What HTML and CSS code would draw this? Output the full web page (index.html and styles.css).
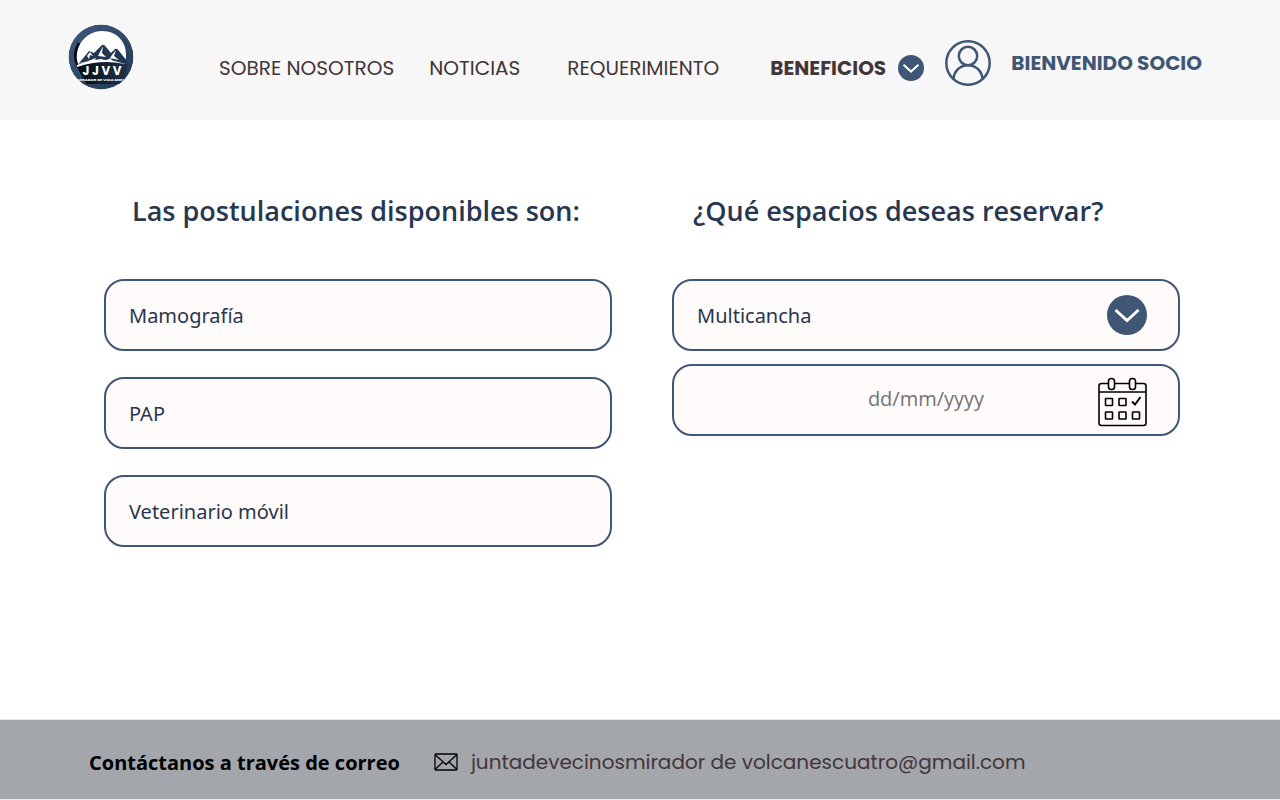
FILE: index.html
```html
<!DOCTYPE html>
<html lang="es">
<head>
<meta charset="utf-8">
<meta name="viewport" content="width=device-width, initial-scale=1">
<title>JJVV Mirador de Volcanes</title>
<link rel="stylesheet" href="styles.css">
</head>
<body>
<header class="header">
  <a class="logo" href="#" aria-label="JJVV Mirador de Volcanes">
    <svg viewBox="0 0 66 66" width="66" height="66">
      <defs>
        <clipPath id="disc"><circle cx="33" cy="33" r="32.5"/></clipPath>
        <linearGradient id="shade" x1="0" y1="0" x2="1" y2="1">
          <stop offset="0.2" stop-color="#3a5375"/>
          <stop offset="1" stop-color="#22374f"/>
        </linearGradient>
        <linearGradient id="base" x1="0" y1="0" x2="1" y2="0">
          <stop offset="0" stop-color="#05090f"/>
          <stop offset="1" stop-color="#1f334c"/>
        </linearGradient>
      </defs>
      <g clip-path="url(#disc)">
        <circle cx="33" cy="33" r="32.5" fill="url(#shade)"/>
        <path d="M10 18Q2 32 10 45L18 60L56 60L60 40L30 36Z" fill="url(#base)"/>
        <path d="M10 40C5 24 17 7 34 7C49 7 59 18 58 33L57 40Q33 32 10 40Z" fill="#fff"/>
        <path d="M11 39L17 32L21 27L26 29L34 21Q36 20 38 23L43 29L47 25Q49 24 51 27L59 37L57 40Q33 33 11 39Z" fill="#22364f"/>
        <path d="M19 32L22 28L25 32L22 31L21 35ZM32 28L35 22L34 29L38 33L30 32ZM44 31L48 26L46 32L51 36L42 34ZM20 37L28 34L27 36L34 35L37 37ZM38 36L44 34L43 36L52 39Z" fill="#fff"/>
        <path d="M9 41Q31 31 57 40Q33 35 9 43Z" fill="#fff"/>
        <text class="logo-name" x="34" y="51" text-anchor="middle">J J V V</text>
        <text class="logo-place" x="33" y="57" text-anchor="middle">MIRADOR DE VOLCANES</text>
      </g>
    </svg>
  </a>
  <nav class="nav" aria-label="Principal">
    <a href="#">SOBRE NOSOTROS</a>
    <a href="#">NOTICIAS</a>
    <a class="nav-wide" href="#">REQUERIMIENTO</a>
    <button class="benefits" type="button" aria-haspopup="true">
      BENEFICIOS
      <svg viewBox="0 0 40 40" width="26" height="26" aria-hidden="true"><circle cx="20" cy="20" r="20" fill="#3f5675"/><path d="M8.5 15L20 25.5L31.5 15" fill="none" stroke="#fff" stroke-width="3"/></svg>
    </button>
  </nav>
  <a class="member" href="#">
    <svg viewBox="0 0 46 46" width="46" height="46" fill="none" stroke="#3f5675" stroke-width="2.5" aria-hidden="true"><circle cx="23" cy="23" r="21.700"/><circle cx="23" cy="16" r="9.200"/><path d="M8.500 39C9 31 15 25.200 23 25.200S37 31 37.500 39"/></svg>
    BIENVENIDO SOCIO
  </a>
</header>

<main class="main">
  <section class="column">
    <h2 class="title">Las postulaciones disponibles son:</h2>
    <div class="options">
      <button class="field" type="button">Mamografía</button>
      <button class="field" type="button">PAP</button>
      <button class="field" type="button">Veterinario móvil</button>
    </div>
  </section>
  <section class="column">
    <h2 class="title title-booking"><label for="space">¿Qué espacios deseas reservar?</label></h2>
    <div class="booking">
      <div class="control">
        <select class="field" id="space"><option>Multicancha</option></select>
        <svg class="control-icon" viewBox="0 0 40 40" width="40" height="40" aria-hidden="true"><circle cx="20" cy="20" r="20" fill="#3f5675"/><path d="M8.5 15L20 25.5L31.5 15" fill="none" stroke="#fff" stroke-width="3"/></svg>
      </div>
      <div class="control">
        <input class="field date" type="text" placeholder="dd/mm/yyyy" aria-label="Fecha de reserva">
        <svg class="control-icon" viewBox="0 0 49 44" width="49" height="44" fill="none" stroke="#000" stroke-width="1.6" overflow="visible" aria-hidden="true">
          <path d="M10 5.500H3.500Q1 5.500 1 8V45Q1 47.500 3.500 47.500H45.500Q48 47.500 48 45V8Q48 5.500 45.500 5.500H38M17 5.500H31M1 14H48"/>
          <rect x="10.500" y="0.500" width="6" height="11" rx="2.800"/><rect x="31.500" y="0.500" width="6" height="11" rx="2.800"/>
          <rect x="7.500" y="20.500" width="7" height="7" rx=".5"/><rect x="21" y="20.500" width="7" height="7" rx=".5"/>
          <rect x="7.500" y="34" width="7" height="7" rx=".5"/><rect x="21" y="34" width="7" height="7" rx=".5"/><rect x="34.500" y="34" width="7" height="7" rx=".5"/>
          <path d="M34 23.500L37 26.500L42.500 19" stroke-width="2"/>
        </svg>
      </div>
    </div>
  </section>
</main>

<footer class="footer">
  <strong class="contact">Contáctanos a través de correo</strong>
  <a class="mail" href="mailto:juntadevecinosmiradordevolcanescuatro@gmail.com">
    <svg viewBox="0 0 24 18" width="24" height="18" fill="none" stroke="#000" stroke-width="1.3" aria-hidden="true"><rect x="1" y="1" width="22" height="16" rx="1"/><path d="M1 1.500L12 11.500L23 1.500M1 16.500L9 9M23 16.500L15 9"/></svg>
    juntadevecinosmirador de volcanescuatro@gmail.com
  </a>
</footer>
</body>
</html>
```
FILE: styles.css
```css
* { box-sizing: border-box; }

body {
  margin: 0;
  min-height: 100vh;
  display: flex;
  flex-direction: column;
  background: #fff;
  color: #27374f;
  font-family: "Open Sans", sans-serif;
}

a { color: inherit; text-decoration: none; }
svg { display: block; flex: none; }
button, input, select { font: inherit; color: inherit; }

.header {
  min-height: 120px;
  padding: 24px 78px 30px 68px;
  display: flex;
  align-items: flex-start;
  background: #f7f7f7;
  color: #433538;
  font-family: Poppins, Inter, sans-serif;
  font-size: 20px;
  line-height: 28px;
}

.logo-name { font: 700 12px/1 Poppins, Inter, sans-serif; fill: #fff; }
.logo-place { font: 700 4px/1 Poppins, Inter, sans-serif; fill: #fff; }

.nav {
  flex: 1;
  display: flex;
  align-items: center;
  gap: 35px;
  margin: 30px 20px 0 85px;
  white-space: nowrap;
}

.nav-wide { margin: 0 16px 0 12px; }

.benefits {
  display: flex;
  align-items: center;
  gap: 12px;
  padding: 0;
  border: 0;
  background: none;
  font-weight: 700;
}

.member {
  display: flex;
  align-items: center;
  gap: 20px;
  margin-top: 16px;
  color: #3f5675;
  font-weight: 700;
  white-space: nowrap;
}

.main {
  flex: 1;
  display: grid;
  grid-template-columns: 1fr 1fr;
  gap: 60px;
  align-items: start;
  padding: 71px 100px 72px 104px;
}

.title {
  margin: 0 0 48px;
  padding-left: 28px;
  font: 600 27px/40px "Open Sans", sans-serif;
}

.title-booking { padding-left: 21px; }

.options { display: grid; gap: 26px; }
.booking { display: grid; gap: 13px; }

.field {
  width: 100%;
  height: 72px;
  padding: 0 23px;
  border: 2px solid #3f5675;
  border-radius: 20px;
  background: #fffbfa;
  font-family: "Noto Sans", sans-serif;
  font-size: 20px;
  text-align: left;
  appearance: none;
}

.control { position: relative; }

.control-icon {
  position: absolute;
  right: 33px;
  top: 50%;
  transform: translateY(-50%);
  pointer-events: none;
}

.date {
  padding: 0 72px 3px;
  font-family: "Open Sans", sans-serif;
  text-align: center;
}

.date::placeholder { color: #737373; opacity: 1; }

.footer {
  min-height: 81px;
  padding: 5px 89px 0;
  display: flex;
  align-items: center;
  gap: 34px;
  border: solid #e6e7e8;
  border-width: 1px 0;
  background: #a3a6ab;
  font-size: 20px;
}

.contact { color: #000; font-weight: 700; }

.mail {
  display: flex;
  align-items: center;
  gap: 13px;
  color: #433538;
  font-family: Poppins, Inter, sans-serif;
}

@media (max-width: 1100px) {
  .header, .nav, .footer { flex-wrap: wrap; }
}

@media (max-width: 800px) {
  .main { grid-template-columns: 1fr; padding: 48px 24px; }
}
```
